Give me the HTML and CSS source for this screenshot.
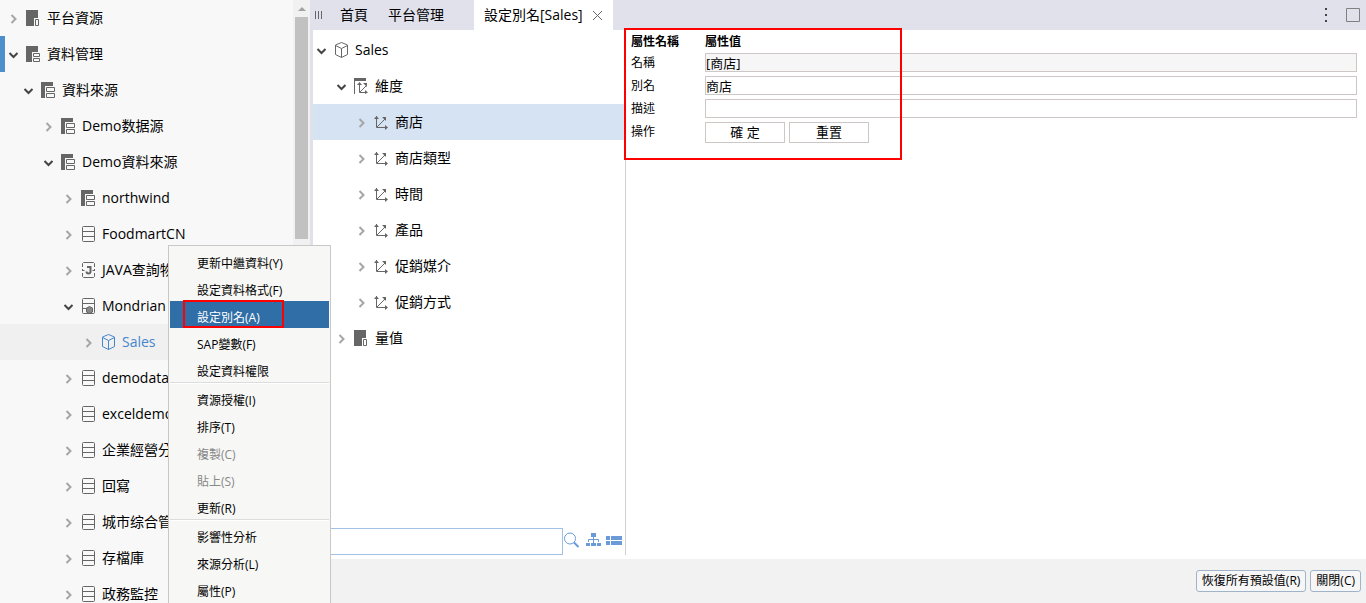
FILE: index.html
```html
<!DOCTYPE html>
<html lang="zh-TW">
<head>
    <meta charset="UTF-8">
    <meta name="viewport" content="width=device-width, initial-scale=1.0">
    <title>設定別名[Sales]</title>
    <link rel="stylesheet" href="styles.css">
</head>
<body>
    <!-- shared icons -->
    <svg class="sprite" aria-hidden="true">
        <symbol id="closed" viewBox="0 0 12 12"><path d="M4.500 3l4 4-4 4" fill="none" stroke="#a6a6a6" stroke-width="2"/></symbol>
        <symbol id="open" viewBox="0 0 12 12"><path d="M2.500 5l4 4 4-4" fill="none" stroke="#444" stroke-width="2"/></symbol>
        <symbol id="folder" viewBox="0 0 16 16"><path d="M0 0h12v8H8v8H0z" fill="#666"/><path d="M9.500 9.500h3v6h-3z" fill="none" stroke="#666"/></symbol>
        <symbol id="group" viewBox="0 0 16 16"><path d="M0 0h12v6H6v10H0z" fill="#666"/><path d="M7.500 7.500h6v3h-6zM7.500 12.500h6v3h-6z" fill="none" stroke="#666"/></symbol>
        <symbol id="source" viewBox="0 0 16 16"><path d="M0 0h12v4H4v12H0z" fill="#666"/><path d="M5.500 5.500h8v4h-8zM5.500 11.500h8v4h-8z" fill="none" stroke="#666"/></symbol>
        <symbol id="db" viewBox="0 0 16 16"><rect x="1.500" y=".5" width="12" height="15" rx="1" fill="none" stroke="#666"/><path d="M1 5.500h13M1 10.500h13" stroke="#666"/></symbol>
        <symbol id="java" viewBox="0 0 16 16"><path d="M1.500 5V1.500l1-1h10l1 1V5M1.500 7v2M13.500 7v2M1.500 11v3.500l1 1h10l1-1V11" fill="none" stroke="#666"/><path d="M2 8.500h1.500M11.500 8.500H13" stroke="#666"/><path d="M6 5h3.500v4.500q0 2-2 2Q5.500 11.500 5.500 9.500" fill="none" stroke="#666" stroke-width="2"/></symbol>
        <symbol id="cube-db" viewBox="0 0 16 16"><rect x="1.500" y=".5" width="12" height="15" rx="1" fill="none" stroke="#666"/><path d="M1 5.500h13M1 10.500h4" stroke="#666"/><path d="M8.500 8.500l3 1.500v4l-3 1.500-3-1.500v-4z" fill="#888" stroke="#666"/></symbol>
        <symbol id="cube" viewBox="0 0 16 16"><path d="M7.500.5l6 2.500v9.500l-6 3-6-3V3zM1.500 3.500l6 3 6-3M7.500 6.500v9" fill="none" stroke="currentColor"/></symbol>
        <symbol id="dim" viewBox="0 0 16 16"><path d="M2.500 2v11.500H13M3 13l8-8" fill="none" stroke="#666"/><path d="M0 5l2.500-3L5 5zM11 11l3 2.500-3 2.500zM8 3h4v4z" fill="#666"/></symbol>
        <symbol id="dims" viewBox="0 0 16 16"><path d="M0 0h12v3H1v13H0z" fill="#666"/><path d="M5.500 6v8.500H13M6 14l6-6" fill="none" stroke="#666"/><path d="M3 7l2.500-3L8 7zM11 12l3 2.500-3 1.500zM9 5h4v4z" fill="#666"/></symbol>
    </svg>

    <aside class="sidebar">
        <ul class="tree">
            <li class="row"><svg class="arrow"><use href="#closed"/></svg><svg class="icon"><use href="#folder"/></svg><a href="#">平台資源</a></li>
            <li class="row current"><svg class="arrow"><use href="#open"/></svg><svg class="icon"><use href="#group"/></svg><a href="#">資料管理</a></li>
            <li class="row level1"><svg class="arrow"><use href="#open"/></svg><svg class="icon"><use href="#source"/></svg><a href="#">資料來源</a></li>
            <li class="row level2"><svg class="arrow"><use href="#closed"/></svg><svg class="icon"><use href="#source"/></svg><a href="#">Demo数据源</a></li>
            <li class="row level2"><svg class="arrow"><use href="#open"/></svg><svg class="icon"><use href="#source"/></svg><a href="#">Demo資料來源</a></li>
            <li class="row level3"><svg class="arrow"><use href="#closed"/></svg><svg class="icon"><use href="#source"/></svg><a href="#">northwind</a></li>
            <li class="row level3"><svg class="arrow"><use href="#closed"/></svg><svg class="icon"><use href="#db"/></svg><a href="#">FoodmartCN</a></li>
            <li class="row level3"><svg class="arrow"><use href="#closed"/></svg><svg class="icon"><use href="#java"/></svg><a href="#">JAVA查詢物件</a></li>
            <li class="row level3"><svg class="arrow"><use href="#open"/></svg><svg class="icon"><use href="#cube-db"/></svg><a href="#">Mondrian</a></li>
            <li class="row level4 picked"><svg class="arrow"><use href="#closed"/></svg><svg class="icon"><use href="#cube"/></svg><a href="#">Sales</a></li>
            <li class="row level3"><svg class="arrow"><use href="#closed"/></svg><svg class="icon"><use href="#db"/></svg><a href="#">demodata</a></li>
            <li class="row level3"><svg class="arrow"><use href="#closed"/></svg><svg class="icon"><use href="#db"/></svg><a href="#">exceldemo</a></li>
            <li class="row level3"><svg class="arrow"><use href="#closed"/></svg><svg class="icon"><use href="#db"/></svg><a href="#">企業經營分析</a></li>
            <li class="row level3"><svg class="arrow"><use href="#closed"/></svg><svg class="icon"><use href="#db"/></svg><a href="#">回寫</a></li>
            <li class="row level3"><svg class="arrow"><use href="#closed"/></svg><svg class="icon"><use href="#db"/></svg><a href="#">城市综合管理</a></li>
            <li class="row level3"><svg class="arrow"><use href="#closed"/></svg><svg class="icon"><use href="#db"/></svg><a href="#">存檔庫</a></li>
            <li class="row level3"><svg class="arrow"><use href="#closed"/></svg><svg class="icon"><use href="#db"/></svg><a href="#">政務監控</a></li>
        </ul>
        <div class="scrollbar">
            <svg class="scroll-up" viewBox="0 0 8 4"><path d="M0 4l4-4 4 4z" fill="#a3a3a3"/></svg>
            <div class="thumb"></div>
        </div>
    </aside>

    <main class="main">
        <nav class="tabs">
            <svg class="grip" viewBox="0 0 8 8"><path d="M.5 0v8M3.500 0v8M6.500 0v8" stroke="#666"/></svg>
            <a class="tab" href="#">首頁</a>
            <a class="tab" href="#">平台管理</a>
            <a class="tab active" href="#">設定別名[Sales]
                <svg class="close" viewBox="0 0 10 10"><path d="M0 1l9 9M9 1l-9 9" stroke="#666" fill="none"/></svg>
            </a>
            <div class="tab-tools">
                <svg class="dots" viewBox="0 0 2 14"><path d="M0 0h2v2H0zM0 6h2v2H0zM0 12h2v2H0z" fill="#444"/></svg>
                <svg class="maximize" viewBox="0 0 14 14"><path d="M.5.5h13v13H.5z" fill="none" stroke="#808080"/></svg>
            </div>
        </nav>

        <div class="workspace">
            <section class="model">
                <ul class="tree">
                    <li class="row"><svg class="arrow"><use href="#open"/></svg><svg class="icon"><use href="#cube"/></svg><a href="#">Sales</a></li>
                    <li class="row level1"><svg class="arrow"><use href="#open"/></svg><svg class="icon"><use href="#dims"/></svg><a href="#">維度</a></li>
                    <li class="row level2 selected"><svg class="arrow"><use href="#closed"/></svg><svg class="icon"><use href="#dim"/></svg><a href="#">商店</a></li>
                    <li class="row level2"><svg class="arrow"><use href="#closed"/></svg><svg class="icon"><use href="#dim"/></svg><a href="#">商店類型</a></li>
                    <li class="row level2"><svg class="arrow"><use href="#closed"/></svg><svg class="icon"><use href="#dim"/></svg><a href="#">時間</a></li>
                    <li class="row level2"><svg class="arrow"><use href="#closed"/></svg><svg class="icon"><use href="#dim"/></svg><a href="#">產品</a></li>
                    <li class="row level2"><svg class="arrow"><use href="#closed"/></svg><svg class="icon"><use href="#dim"/></svg><a href="#">促銷媒介</a></li>
                    <li class="row level2"><svg class="arrow"><use href="#closed"/></svg><svg class="icon"><use href="#dim"/></svg><a href="#">促銷方式</a></li>
                    <li class="row level1"><svg class="arrow"><use href="#closed"/></svg><svg class="icon"><use href="#folder"/></svg><a href="#">量值</a></li>
                </ul>
                <div class="search">
                    <input type="text" class="search-box" aria-label="搜尋">
                    <button class="tool" aria-label="搜尋"><svg viewBox="0 0 16 16"><circle cx="6" cy="6.500" r="5.500" fill="none" stroke="#6a9bd8"/><path d="M10 10.500l4.500 4.500" stroke="#6a9bd8" stroke-width="2"/></svg></button>
                    <button class="tool" aria-label="樹狀"><svg viewBox="0 0 16 16"><path d="M6 1h5v4H6zM1 11h4v3H1zM6 11h5v3H6zM12 11h4v3h-4z" fill="#6a9bd8"/><path d="M8.500 5v6M3.500 10V7.500h10V10" fill="none" stroke="#6a9bd8"/></svg></button>
                    <button class="tool" aria-label="清單"><svg viewBox="0 0 16 16"><path d="M0 4h4v4H0zM5 4h11v4H5zM0 9h4v4H0zM5 9h11v4H5z" fill="#6a9bd8"/></svg></button>
                </div>
            </section>

            <section class="detail">
                <table class="props">
                    <thead>
                        <tr><th class="name">屬性名稱</th><th>屬性值</th></tr>
                    </thead>
                    <tbody>
                        <tr><td><label for="name">名稱</label></td><td><input type="text" id="name" value="[商店]" readonly></td></tr>
                        <tr><td><label for="alias">別名</label></td><td><input type="text" id="alias" value="商店"></td></tr>
                        <tr><td><label for="desc">描述</label></td><td><input type="text" id="desc"></td></tr>
                        <tr><td>操作</td><td><div class="actions"><button class="action">確 定</button><button class="action">重置</button></div></td></tr>
                    </tbody>
                </table>
                <div class="mark form-mark"></div>
            </section>
        </div>

        <footer class="footer">
            <button class="footer-btn">恢復所有預設值(R)</button>
            <button class="footer-btn">關閉(C)</button>
        </footer>
    </main>

    <div class="menu">
        <button class="item">更新中繼資料(Y)</button>
        <button class="item">設定資料格式(F)</button>
        <button class="item hover">設定別名(A)<span class="mark item-mark"></span></button>
        <button class="item">SAP變數(F)</button>
        <button class="item">設定資料權限</button>
        <hr>
        <button class="item">資源授權(I)</button>
        <button class="item">排序(T)</button>
        <button class="item" disabled>複製(C)</button>
        <button class="item" disabled>貼上(S)</button>
        <button class="item">更新(R)</button>
        <hr>
        <button class="item">影響性分析</button>
        <button class="item">來源分析(L)</button>
        <button class="item">屬性(P)</button>
    </div>
</body>
</html>
```
FILE: styles.css
```css
* {
    box-sizing: border-box;
}

body {
    margin: 0;
    height: 100vh;
    display: flex;
    overflow: hidden;
    position: relative;
    background-color: #fff;
    color: #000;
    font-family: "Open Sans", "Noto Sans CJK TC", sans-serif;
    font-size: 14px;
}

button, input {
    font-family: inherit;
    color: inherit;
}

a {
    color: inherit;
    text-decoration: none;
}

.sprite {
    position: absolute;
    width: 0;
    height: 0;
}

/* left resource tree */
.sidebar {
    flex: 0 0 310px;
    display: flex;
    background-color: #f8f8f8;
    overflow: hidden;
}

.sidebar .tree {
    flex: 1;
}

.tree {
    list-style: none;
    margin: 0;
    padding: 0;
}

.row {
    display: flex;
    align-items: center;
    height: 36px;
    padding-left: 7px;
    white-space: nowrap;
    line-height: 20px;
}

.arrow {
    width: 12px;
    height: 12px;
    margin-right: 7px;
    flex: none;
}

.icon {
    width: 16px;
    height: 16px;
    margin-right: 5px;
    flex: none;
    color: #666;
}

.level1 { padding-left: 22px; }
.level2 { padding-left: 42px; }
.level3 { padding-left: 62px; }
.level4 { padding-left: 82px; }

.current {
    border-left: 5px solid #4d8fcc;
    padding-left: 2px;
}

.picked {
    background-color: #f0f0f0;
}

.picked, .picked .icon {
    color: #4585cf;
}

.scrollbar {
    width: 17px;
    background-color: #f1f1f1;
    padding: 7px 2px 0;
}

.scroll-up {
    display: block;
    width: 8px;
    height: 4px;
    margin: 0 auto 6px;
}

.thumb {
    height: 222px;
    background-color: #c1c1c1;
}

/* right side */
.main {
    flex: 1;
    min-width: 0;
    display: flex;
    flex-direction: column;
    border-left: 3px solid #e1e1ec;
}

.tabs {
    display: flex;
    align-items: center;
    height: 30px;
    background-color: #e1e1ec;
}

.grip {
    width: 8px;
    height: 8px;
    margin: 0 9px 0 2px;
}

.tab {
    height: 30px;
    line-height: 30px;
    padding: 0 12px 0 8px;
}

.tab.active {
    display: flex;
    align-items: center;
    gap: 10px;
    margin-left: 18px;
    padding: 0 10px;
    background-color: #fff;
}

.close {
    width: 10px;
    height: 10px;
    overflow: visible;
}

.tab-tools {
    display: flex;
    align-items: center;
    gap: 19px;
    margin-left: auto;
    padding-right: 6px;
}

.dots {
    width: 2px;
    height: 14px;
}

.maximize {
    width: 14px;
    height: 14px;
}

.workspace {
    flex: 1;
    min-height: 0;
    display: flex;
    padding-bottom: 4px;
}

.model {
    flex: 0 0 313px;
    display: flex;
    flex-direction: column;
    justify-content: space-between;
    padding-top: 2px;
    border-right: 1px solid #d0d0d4;
}

.model .row { padding-left: 2px; }
.model .level1 { padding-left: 22px; }
.model .level2 { padding-left: 42px; }

.selected {
    background-color: #d6e3f3;
}

.search {
    display: flex;
    align-items: center;
    padding-right: 3px;
    gap: 5px;
}

.search-box {
    flex: 1;
    min-width: 0;
    height: 27px;
    margin-right: -4px;
    border: 1px solid #a2c1e5;
    outline: none;
}

.tool {
    width: 16px;
    height: 19px;
    padding: 0 0 3px;
    border: none;
    background: none;
}

.tool svg {
    display: block;
    width: 16px;
    height: 16px;
}

/* property form */
.detail {
    flex: 1;
    position: relative;
    padding: 3px 9px 0 5px;
}

.props {
    width: 100%;
    table-layout: fixed;
    border-collapse: collapse;
    font-size: 12px;
    line-height: 18px;
}

.props th, .props td {
    height: 23px;
    padding: 0;
    text-align: left;
}

.props th {
    height: 18px;
}

.name {
    width: 74px;
}

.props input {
    display: block;
    width: 100%;
    height: 19px;
    padding: 0;
    border: 1px solid #cdc8c6;
    font-size: 13px;
}

.props input[readonly] {
    background-color: #f6f6f6;
}

.actions {
    display: flex;
    gap: 4px;
    padding-top: 2px;
}

.action {
    width: 80px;
    height: 21px;
    padding: 0;
    border: 1px solid #cdc8c6;
    background-color: #fff;
    font-size: 13px;
    line-height: 19px;
}

/* red highlight frames */
.mark {
    position: absolute;
    border: 2px solid #f00;
    pointer-events: none;
}

.form-mark {
    top: -2px;
    left: -2px;
    width: 278px;
    height: 132px;
}

.item-mark {
    top: -1px;
    left: 13px;
    width: 101px;
    height: 28px;
}

.footer {
    height: 44px;
    display: flex;
    align-items: center;
    justify-content: flex-end;
    gap: 4px;
    padding-right: 5px;
    background-color: #f2f2f2;
}

.footer-btn {
    height: 22px;
    padding: 0 5px;
    border: 1px solid #9fb4c8;
    border-radius: 3px;
    background-color: #f6f6f6;
    font-size: 12px;
    line-height: 20px;
}

/* context menu */
.menu {
    position: absolute;
    top: 245px;
    left: 168px;
    width: 163px;
    padding: 1px;
    border: 1px solid #c8c8c8;
    border-bottom: none;
    background-color: #f7f7f5;
}

.item {
    display: block;
    position: relative;
    width: 100%;
    height: 27px;
    padding: 6px 0 0 27px;
    border: none;
    background: none;
    font-size: 12px;
    line-height: 20px;
    text-align: left;
    white-space: nowrap;
}

.item:disabled {
    color: #888;
}

.item.hover {
    background-color: #2f6ea6;
    color: #fff;
}

.menu hr {
    height: 2px;
    margin: 0;
    border: none;
    border-top: 1px solid #dcdcdc;
    background-color: #fff;
}
```
